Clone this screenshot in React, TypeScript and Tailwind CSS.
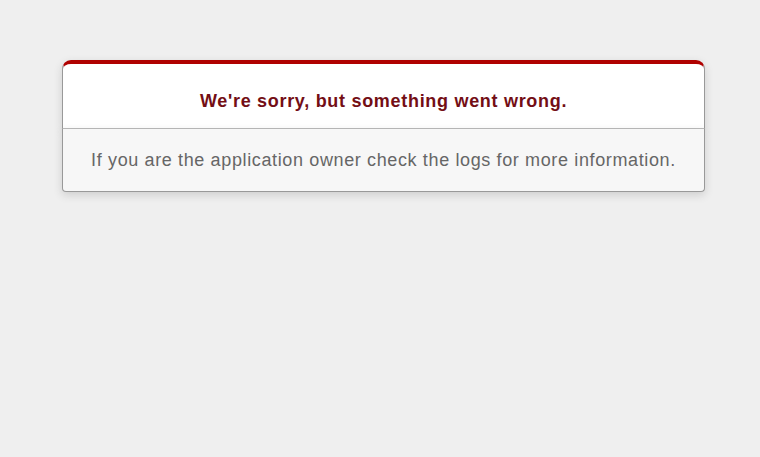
import React from 'react';

const App = () => {
  return (
    <div className="min-h-screen w-full bg-[#efefef] pt-[60px] text-center font-['Liberation_Sans',Arial,sans-serif] text-[#2e2f30]">
      <div className="ml-[62px] w-[643px]">
        <div className="h-[69px] rounded-t-[9px] border border-t-4 border-[#ccc] border-x-[#999] border-b-[#bbb] border-t-[#b00100] bg-white px-[8%] pt-[25px] shadow-[0_3px_8px_rgba(50,50,50,0.17)]">
          <h1 className="text-[18px] font-bold leading-[24px] tracking-[0.7px] text-[#730e15]">
            We're sorry, but something went wrong.
          </h1>
        </div>
        <p className="h-[63px] rounded-b-[4px] border border-t-0 border-[#999] bg-[#f7f7f7] pt-[19px] text-[18px] leading-[24px] tracking-[0.63px] text-[#666] shadow-[0_3px_8px_rgba(50,50,50,0.17)]">
          If you are the application owner check the logs for more information.
        </p>
      </div>
    </div>
  );
};

export default App;
